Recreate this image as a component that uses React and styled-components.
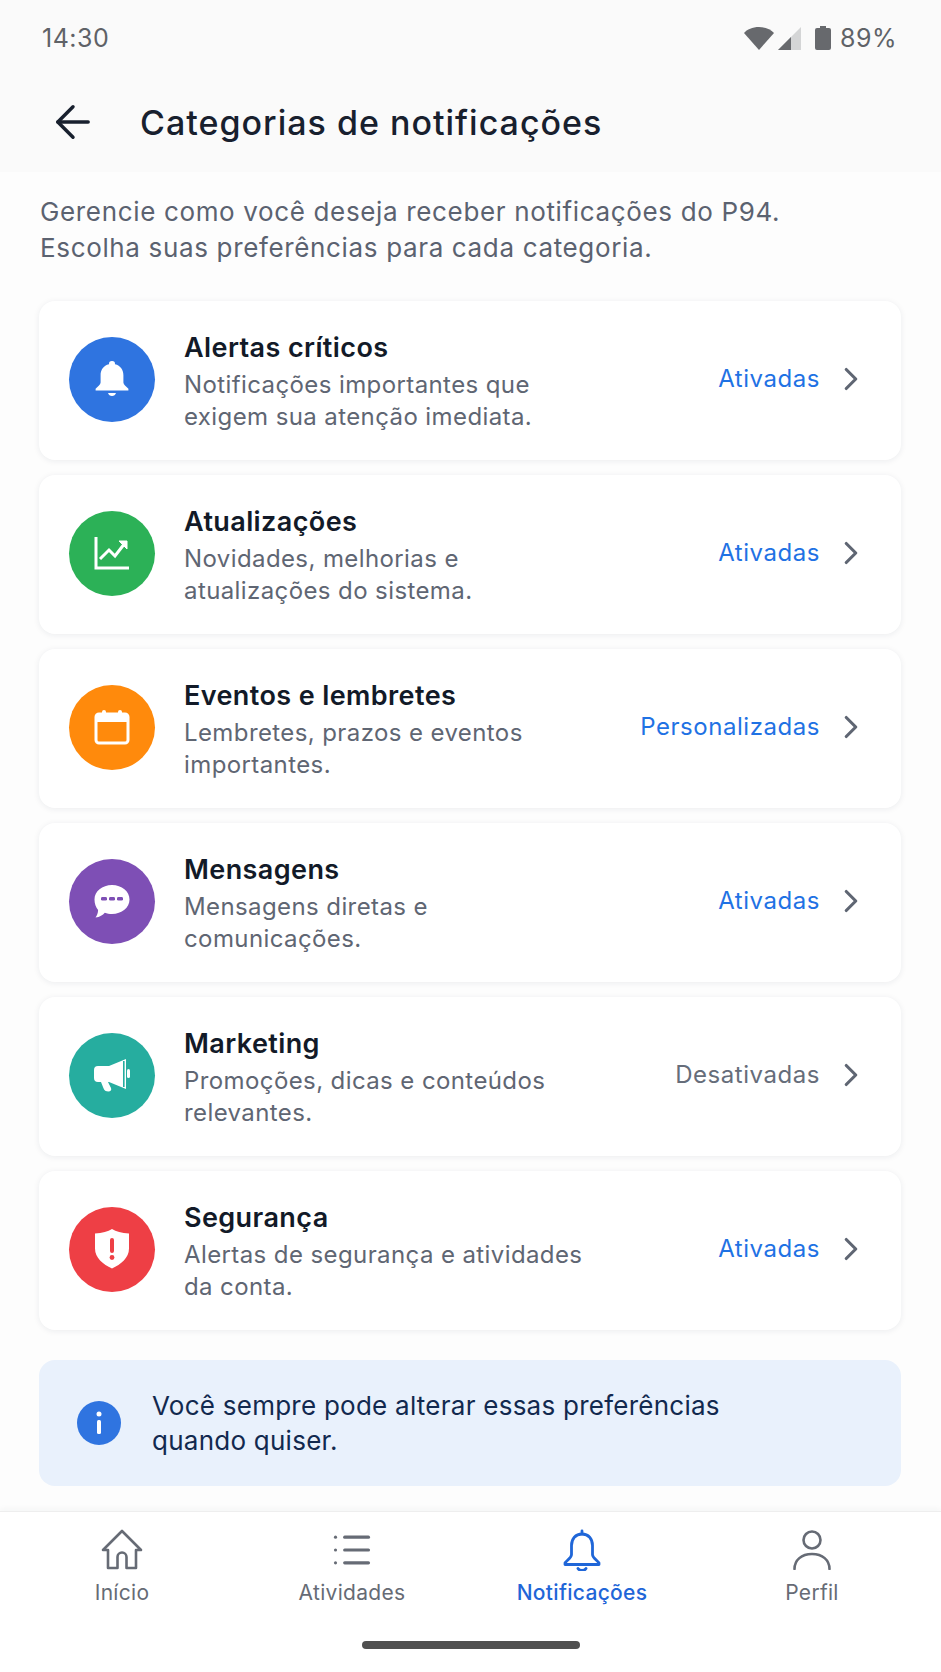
import React from 'react';
import styled, { createGlobalStyle } from 'styled-components';
import { ArrowLeft, ChevronRight, List } from 'lucide-react';

const GlobalStyle = createGlobalStyle`
  html, body { margin: 0; padding: 0; background: #fdfdfd; }
  body { font-family: Inter, "Open Sans", sans-serif; }
  * { box-sizing: border-box; }
`;

const Page = styled.div`
  width: 941px;
  height: 1672px;
  display: flex;
  flex-direction: column;
  overflow: hidden;
  background: #fdfdfd;
`;

const TopArea = styled.header`
  height: 172px;
  background: #fafafa;
`;

const StatusBar = styled.div`
  height: 76px;
  padding: 0 44px 0 42px;
  display: flex;
  align-items: center;
  justify-content: space-between;
  color: #5f6267;
  font-size: 25px;
  letter-spacing: 0.5px;
`;

const StatusIcons = styled.div`
  display: flex;
  align-items: center;
  gap: 4px;
`;

const Percent = styled.span`
  margin-left: 5px;
`;

const TitleRow = styled.div`
  height: 92px;
  padding-left: 47px;
  display: flex;
  align-items: center;
  gap: 41px;
  color: #18202e;
`;

const Title = styled.h1`
  margin: 0;
  font-size: 34px;
  font-weight: 500;
  letter-spacing: 1px;
`;

const Content = styled.main`
  flex: 1;
  padding: 22px 40px 0 39px;
`;

const Intro = styled.p`
  margin: 0 0 35px 1px;
  font-size: 26px;
  line-height: 36px;
  letter-spacing: 0.65px;
  color: #5b6270;
`;

const CardList = styled.div`
  display: flex;
  flex-direction: column;
  gap: 15px;
`;

const Card = styled.section`
  height: 159px;
  padding: 0 43px 3px 30px;
  display: flex;
  align-items: center;
  background: #ffffff;
  border-radius: 16px;
  box-shadow: 0 1px 6px rgba(30, 40, 60, 0.08);
`;

const Circle = styled.div`
  width: 86px;
  height: 85px;
  flex: none;
  border-radius: 50%;
  display: flex;
  align-items: center;
  justify-content: center;
  background: ${({ $bg }) => $bg};
`;

const CardText = styled.div`
  flex: 1;
  margin: 5px 0 0 29px;
`;

const CardTitle = styled.h2`
  margin: 0 0 4px;
  font-size: 27px;
  line-height: 34px;
  letter-spacing: 0.4px;
  font-weight: 600;
  color: #121a28;
`;

const CardDesc = styled.p`
  margin: 0;
  font-size: 24px;
  line-height: 32px;
  letter-spacing: 0.4px;
  color: #5f6673;
`;

const State = styled.span`
  margin: 0 24px 2px 0;
  font-size: 24px;
  letter-spacing: 0.55px;
  color: ${({ $off }) => ($off ? '#666d7a' : '#1f72e4')};
`;

const InfoBox = styled.aside`
  height: 126px;
  margin-top: 30px;
  padding: 0 40px 0 38px;
  display: flex;
  align-items: center;
  gap: 31px;
  background: #e9f1fc;
  border-radius: 16px;
`;

const InfoText = styled.p`
  margin: 0;
  font-size: 26px;
  line-height: 35px;
  letter-spacing: 0.25px;
  color: #12294f;
`;

const BottomNav = styled.nav`
  height: 161px;
  background: #ffffff;
  border-top: 1px solid #eeeeee;
  box-shadow: 0 -2px 6px rgba(30, 40, 60, 0.04);
`;

const NavRow = styled.div`
  padding: 17px 14px 0 7px;
  display: grid;
  grid-template-columns: repeat(4, 1fr);
`;

const NavItem = styled.div`
  display: flex;
  flex-direction: column;
  align-items: center;
  gap: 8px;
  font-size: 21px;
  line-height: 28px;
  letter-spacing: 0.3px;
  font-weight: ${({ $active }) => ($active ? 500 : 400)};
  color: ${({ $active }) => ($active ? '#1f66d8' : '#666b75')};
`;

const NavIcon = styled.div`
  height: 42px;
  display: flex;
  align-items: center;
  justify-content: center;
`;

const HomeBar = styled.div`
  width: 218px;
  height: 8px;
  margin: 34px auto 0;
  border-radius: 4px;
  background: #505050;
`;

const BellIcon = () => (
  <svg width="36" height="38" viewBox="0 0 36 38" fill="#fff">
    <path d="M18 1a3 3 0 0 1 3 3.2c5.6 1.3 8.4 5.600 8.400 11v7.400c0 2 2.600 3.600 5 6.200v1.700H1.600v-1.700c2.400-2.600 5-4.200 5-6.200v-7.400c0-5.400 2.800-9.700 8.400-11A3 3 0 0 1 18 1z" />
    <path d="M14 33h8c-.6 2-2 3-4 3s-3.400-1-4-3z" />
  </svg>
);

const ChartIcon = () => (
  <svg width="36" height="34" viewBox="0 0 36 34" fill="none" stroke="#fff" strokeWidth="3">
    <path d="M2 1v31h33" />
    <path d="M6 23l9-9 6 6L31 7" />
    <path d="M25 5h8v8z" fill="#fff" strokeWidth="1" />
  </svg>
);

const CalendarIcon = () => (
  <svg width="36" height="36" viewBox="0 0 36 36" fill="none">
    <rect x="2" y="5" width="32" height="29" rx="3" stroke="#fff" strokeWidth="3" />
    <path d="M2 5h32v8H2z" fill="#fff" />
    <rect x="8" y="1" width="4" height="7" rx="2" fill="#fff" />
    <rect x="24" y="1" width="4" height="7" rx="2" fill="#fff" />
  </svg>
);

const ChatIcon = () => (
  <svg width="36" height="34" viewBox="0 0 36 34">
    <path d="M18 1c9.800 0 17.500 6.400 17.500 14.500S27.800 30 18 30c-2.600 0-5-.4-7.200-1.300C8.600 31 6 33 1.500 33.500c1.500-2 2.500-4.500 2.600-7.600C1.800 23.300.5 19.600.5 15.500.5 7.400 8.200 1 18 1z" fill="#fff" />
    <rect x="7" y="13" width="6" height="3.600" rx="1.400" fill="#7e4fb5" />
    <rect x="15" y="13" width="6" height="3.600" rx="1.400" fill="#7e4fb5" />
    <rect x="23" y="13" width="6" height="3.600" rx="1.400" fill="#7e4fb5" />
  </svg>
);

const MegaphoneIcon = () => (
  <svg width="36" height="34" viewBox="0 0 36 34" fill="#fff">
    <path d="M4 8h11L32 1v30L15 24H4a4 4 0 0 1-4-4v-8a4 4 0 0 1 4-4z" />
    <path d="M7 24h7l3 6c.8 2-.4 3.500-2.600 3.500-2.400 0-4.400-1-5-3.500z" />
    <rect x="29" y="3" width="1.600" height="26" fill="#26ad9f" />
    <rect x="33" y="11" width="3" height="9" rx="1.500" />
  </svg>
);

const ShieldIcon = () => (
  <svg width="36" height="40" viewBox="0 0 36 40">
    <path d="M18 0c4 2.600 9.600 4.200 17 4.600v15C35 29 27 35.500 18 39.500 9 35.500 1 29 1 19.600v-15C8.400 4.200 14 2.600 18 0z" fill="#fff" />
    <rect x="16" y="9" width="4" height="15" rx="2" fill="#ee3f45" />
    <circle cx="18" cy="28.500" r="2.400" fill="#ee3f45" />
  </svg>
);

const categories = [
  { title: 'Alertas críticos', lines: ['Notificações importantes que', 'exigem sua atenção imediata.'], state: 'Ativadas', bg: '#2f74e0', icon: <BellIcon /> },
  { title: 'Atualizações', lines: ['Novidades, melhorias e', 'atualizações do sistema.'], state: 'Ativadas', bg: '#2cb157', icon: <ChartIcon /> },
  { title: 'Eventos e lembretes', lines: ['Lembretes, prazos e eventos', 'importantes.'], state: 'Personalizadas', bg: '#ff8a0c', icon: <CalendarIcon /> },
  { title: 'Mensagens', lines: ['Mensagens diretas e', 'comunicações.'], state: 'Ativadas', bg: '#7e4fb5', icon: <ChatIcon /> },
  { title: 'Marketing', lines: ['Promoções, dicas e conteúdos', 'relevantes.'], state: 'Desativadas', off: true, bg: '#26ad9f', icon: <MegaphoneIcon /> },
  { title: 'Segurança', lines: ['Alertas de segurança e atividades', 'da conta.'], state: 'Ativadas', bg: '#ee3f45', icon: <ShieldIcon /> },
];

const HomeIcon = () => (
  <svg width="42" height="42" viewBox="0 0 42 42" fill="none" stroke="#666b75" strokeWidth="2.600" strokeLinejoin="round">
    <path d="M21 2 40 21h-5v18H25.500V28a4.500 4.500 0 0 0-9 0v11H7V21H2z" />
  </svg>
);

const NavBellIcon = () => (
  <svg width="38" height="42" viewBox="0 0 38 42" fill="none" stroke="#1f66d8" strokeWidth="2.800" strokeLinejoin="round" strokeLinecap="round">
    <path d="M19 2v3" />
    <path d="M19 5c-6.500 0-10.500 4.800-10.500 11.500v9c0 3-3.500 5-6.500 8.500v1.500h34V34c-3-3.500-6.500-5.500-6.500-8.500v-9C29.500 9.800 25.500 5 19 5z" />
    <path d="M15 39.500c.8 1.300 2.200 2 4 2s3.200-.7 4-2" />
  </svg>
);

const UserIcon = () => (
  <svg width="40" height="40" viewBox="0 0 40 40" fill="none" stroke="#666b75" strokeWidth="2.600" strokeLinecap="round">
    <circle cx="20" cy="10" r="8.500" />
    <path d="M2.500 39c0-9 7-15 17.500-15s17.500 6 17.500 15" />
  </svg>
);

const App = () => {
  return (
    <Page>
      <GlobalStyle />
      <TopArea>
        <StatusBar>
          <span>14:30</span>
          <StatusIcons>
            <svg width="30" height="23" viewBox="0 0 30 23" fill="#67696d">
              <path d="M15 23 0 6C3 2.500 8.500 0 15 0s12 2.500 15 6z" />
            </svg>
            <svg width="23" height="23" viewBox="0 0 23 23">
              <path d="M23 0v23H0z" fill="#d4d5d6" />
              <path d="M13 10v13H0z" fill="#67696d" />
            </svg>
            <svg width="16" height="24" viewBox="0 0 16 24" fill="#67696d" style={{ marginLeft: 10 }}>
              <path d="M5 0h6v2h3a2 2 0 0 1 2 2v18a2 2 0 0 1-2 2H2a2 2 0 0 1-2-2V4a2 2 0 0 1 2-2h3z" />
            </svg>
            <Percent>89%</Percent>
          </StatusIcons>
        </StatusBar>
        <TitleRow>
          <ArrowLeft size={52} strokeWidth={1.6} />
          <Title>Categorias de notificações</Title>
        </TitleRow>
      </TopArea>
      <Content>
        <Intro>
          Gerencie como você deseja receber notificações do P94.<br />
          Escolha suas preferências para cada categoria.
        </Intro>
        <CardList>
          {categories.map((c) => (
            <Card key={c.title}>
              <Circle $bg={c.bg}>{c.icon}</Circle>
              <CardText>
                <CardTitle>{c.title}</CardTitle>
                <CardDesc>{c.lines[0]}<br />{c.lines[1]}</CardDesc>
              </CardText>
              <State $off={c.off}>{c.state}</State>
              <ChevronRight size={38} strokeWidth={2} color="#5f6673" style={{ margin: '0 -12px' }} />
            </Card>
          ))}
        </CardList>
        <InfoBox>
          <svg width="44" height="44" viewBox="0 0 44 44">
            <circle cx="22" cy="22" r="22" fill="#2f74e0" />
            <rect x="20" y="19" width="4" height="14" rx="1.500" fill="#fff" />
            <circle cx="22" cy="13" r="2.500" fill="#fff" />
          </svg>
          <InfoText>Você sempre pode alterar essas preferências<br />quando quiser.</InfoText>
        </InfoBox>
      </Content>
      <BottomNav>
        <NavRow>
          <NavItem><NavIcon><HomeIcon /></NavIcon>Início</NavItem>
          <NavItem><NavIcon><List size={44} strokeWidth={1.7} /></NavIcon>Atividades</NavItem>
          <NavItem $active><NavIcon><NavBellIcon /></NavIcon>Notificações</NavItem>
          <NavItem><NavIcon><UserIcon /></NavIcon>Perfil</NavItem>
        </NavRow>
        <HomeBar />
      </BottomNav>
    </Page>
  );
};

export default App;
